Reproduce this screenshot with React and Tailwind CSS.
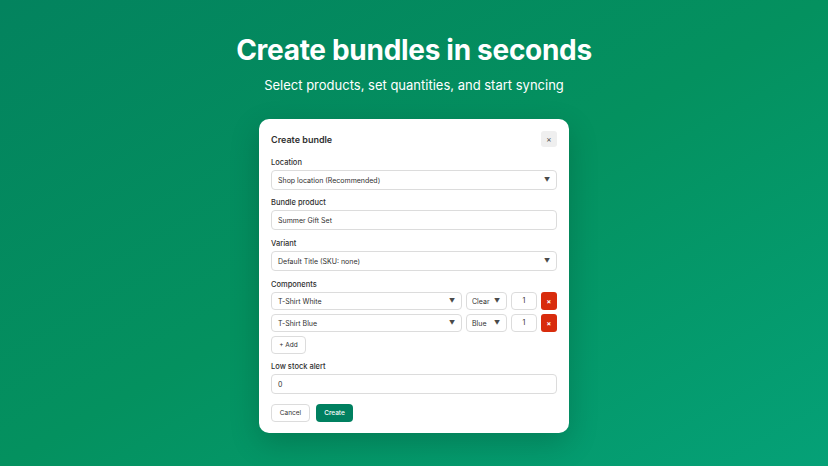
import React from "react";

const font = { fontFamily: "Inter, 'Noto Sans', sans-serif" };

function Chevron() {
  return <span className="text-[6px] leading-none text-[#4a4a4a]">▼</span>;
}

function SelectBox({ text, className = "" }) {
  return (
    <div className={`flex items-center justify-between rounded-[4px] border border-[#dcdcdc] bg-white px-[6px] ${className}`}>
      <span className="text-[7px] leading-none text-[#303030]">{text}</span>
      <Chevron />
    </div>
  );
}

function Label({ children, className = "" }) {
  return <div className={`text-[7.5px] leading-[11px] font-medium text-[#303030] ${className}`}>{children}</div>;
}

function ComponentRow({ name, variant }) {
  return (
    <div className="flex h-[18px] gap-[4px]">
      <SelectBox text={name} className="flex-1 pl-[6px] pr-[6px]" />
      <SelectBox text={variant} className="w-[41px] pl-[5px] pr-[6px]" />
      <div className="flex w-[26px] items-center justify-center rounded-[4px] border border-[#dcdcdc] bg-white text-[7px] text-[#303030]">1</div>
      <div className="flex w-[16px] items-center justify-center rounded-[3px] bg-[#d82c0d] text-[7px] font-bold leading-none text-white">×</div>
    </div>
  );
}

export default function App() {
  return (
    <div style={font} className="flex h-[466px] w-[828px] flex-col items-center overflow-hidden bg-gradient-to-br from-[#03835e] via-[#04915f] to-[#05a177] pt-[34px]">
      <h1 className="text-[28px] font-bold leading-[32px] tracking-[-0.3px] text-white">Create bundles in seconds</h1>
      <p className="mt-[9px] text-[13px] leading-[20px] text-white">Select products, set quantities, and start syncing</p>

      <div className="mt-[24px] flex w-[310px] flex-col rounded-[10px] bg-white px-[12px] pt-[12px] pb-[11px] shadow-[0_10px_30px_rgba(0,0,0,0.18)]">
        <div className="flex h-[16px] items-center justify-between">
          <span className="text-[9px] font-semibold leading-none text-[#303030]">Create bundle</span>
          <div className="flex h-[16px] w-[16px] items-center justify-center rounded-[3px] bg-[#efefef] text-[8px] leading-none text-[#4a4a4a]">×</div>
        </div>

        <Label className="mt-[10px]">Location</Label>
        <SelectBox text="Shop location (Recommended)" className="mt-[2px] h-[20px]" />

        <Label className="mt-[7px]">Bundle product</Label>
        <div className="mt-[2px] flex h-[20px] items-center rounded-[4px] border border-[#dcdcdc] bg-white px-[6px] text-[7px] leading-none text-[#303030]">Summer Gift Set</div>

        <Label className="mt-[8px]">Variant</Label>
        <SelectBox text="Default Title (SKU: none)" className="mt-[2px] h-[20px]" />

        <Label className="mt-[8px]">Components</Label>
        <div className="mt-[2px] flex flex-col gap-[4px]">
          <ComponentRow name="T-Shirt White" variant="Clear" />
          <ComponentRow name="T-Shirt Blue" variant="Blue" />
        </div>

        <div className="mt-[4px] flex">
          <div className="flex h-[18px] w-[35px] items-center justify-center rounded-[4px] border border-[#dcdcdc] bg-white text-[6.5px] leading-none text-[#303030]">+ Add</div>
        </div>

        <Label className="mt-[7px]">Low stock alert</Label>
        <div className="mt-[2px] flex h-[20px] items-center rounded-[4px] border border-[#dcdcdc] bg-white px-[6px] text-[7px] leading-none text-[#303030]">0</div>

        <div className="mt-[10px] flex gap-[6px]">
          <div className="flex h-[18px] w-[39px] items-center justify-center rounded-[4px] border border-[#dcdcdc] bg-white text-[6.5px] leading-none text-[#303030]">Cancel</div>
          <div className="flex h-[18px] w-[37px] items-center justify-center rounded-[4px] bg-[#008060] text-[6.5px] font-medium leading-none text-white">Create</div>
        </div>
      </div>
    </div>
  );
}
